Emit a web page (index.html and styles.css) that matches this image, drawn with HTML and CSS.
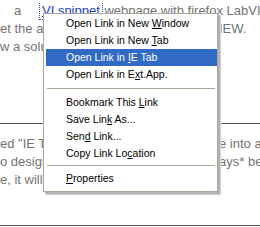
FILE: index.html
```html
<!DOCTYPE html>
<html>
<head>
<meta charset="utf-8">
<link rel="stylesheet" href="styles.css">
</head>
<body>
<div class="page">
  <div class="line"><span class="lead">a</span><a class="link">VI snippet</a> webpage with firefox LabVIEW</div>
  <div class="line split"><span class="left">et the actual snippet back into LabV</span><span class="right">IEW.</span></div>
  <div class="line split"><span class="left">w a solution was found and the</span><span class="right"></span></div>
  <div class="gap"></div>
  <hr class="rule">
  <div class="line split"><span class="left">ed "IE Tab" extension to make the whol</span><span class="right">e into a</span></div>
  <div class="line split"><span class="left">o designed so that the snippet is *alw</span><span class="right">ays* be</span></div>
  <div class="line split"><span class="left">e, it will</span><span class="right"></span></div>
  <div class="gap2"></div>
  <hr class="rule bottom">
</div>

<div class="menu">
  <div class="item">Open Link in New <u>W</u>indow</div>
  <div class="item">Open Link in New <u>T</u>ab</div>
  <div class="item active">Open Link in <u>I</u>E Tab</div>
  <div class="item">Open Link in E<u>x</u>t.App.</div>
  <div class="sep sep1"></div>
  <div class="item">Bookmark This <u>L</u>ink</div>
  <div class="item">Save Lin<u>k</u> As...</div>
  <div class="item">Sen<u>d</u> Link...</div>
  <div class="item">Copy Link Lo<u>c</u>ation</div>
  <div class="sep sep2"></div>
  <div class="item"><u>P</u>roperties</div>
</div>
</body>
</html>
```

FILE: styles.css
```css
html, body {
  margin: 0;
  padding: 0;
  background: #ffffff;
  width: 260px;
  height: 227px;
  overflow: hidden;
}

.page {
  font-family: "Liberation Sans", Arial, sans-serif;
  font-size: 13px;
  color: #737373;
  line-height: 18px;
  padding-top: 2px;
}

.line {
  white-space: nowrap;
  height: 18px;
  overflow: hidden;
}

.lead {
  display: inline-block;
  padding-left: 14px;
  width: 27px;
}

.link {
  color: #1a3fd0;
  text-decoration: underline;
  outline: 1px dotted #2a4fd8;
  outline-offset: 1px;
  padding: 0 1px;
}

.split {
  display: grid;
  grid-template-columns: 219px 41px;
}

.split .left {
  overflow: hidden;
}

.split .right {
  overflow: hidden;
}

.gap {
  height: 67px;
}

.rule {
  margin: 0;
  border: 0;
  height: 1px;
  background: #555555;
}

.gap + .rule {
  margin-bottom: 11px;
}

.gap2 {
  height: 36px;
}

.menu {
  position: absolute;
  left: 43px;
  top: 13px;
  width: 171px;
  padding: 1px 0 4px 2px;
  background: #ffffff;
  border: 1px solid #aca899;
  box-shadow: 2px 2px 0 #b3b3b3, 3px 3px 1px #d6d6d6;
  font-family: "Liberation Sans", Tahoma, sans-serif;
  font-size: 10.5px;
  color: #000000;
}

.item {
  height: 17px;
  line-height: 17px;
  padding-left: 20px;
  white-space: nowrap;
}

.item u {
  text-decoration: underline;
  text-underline-offset: 1px;
}

.item.active {
  background: #316ac5;
  color: #ffffff;
}

.sep {
  height: 1px;
  background: #aca899;
  margin-left: 1px;
  margin-right: 2px;
}

.sep1 {
  margin-top: 5px;
  margin-bottom: 5px;
}

.sep2 {
  margin-top: 3px;
  margin-bottom: 4px;
}
```
